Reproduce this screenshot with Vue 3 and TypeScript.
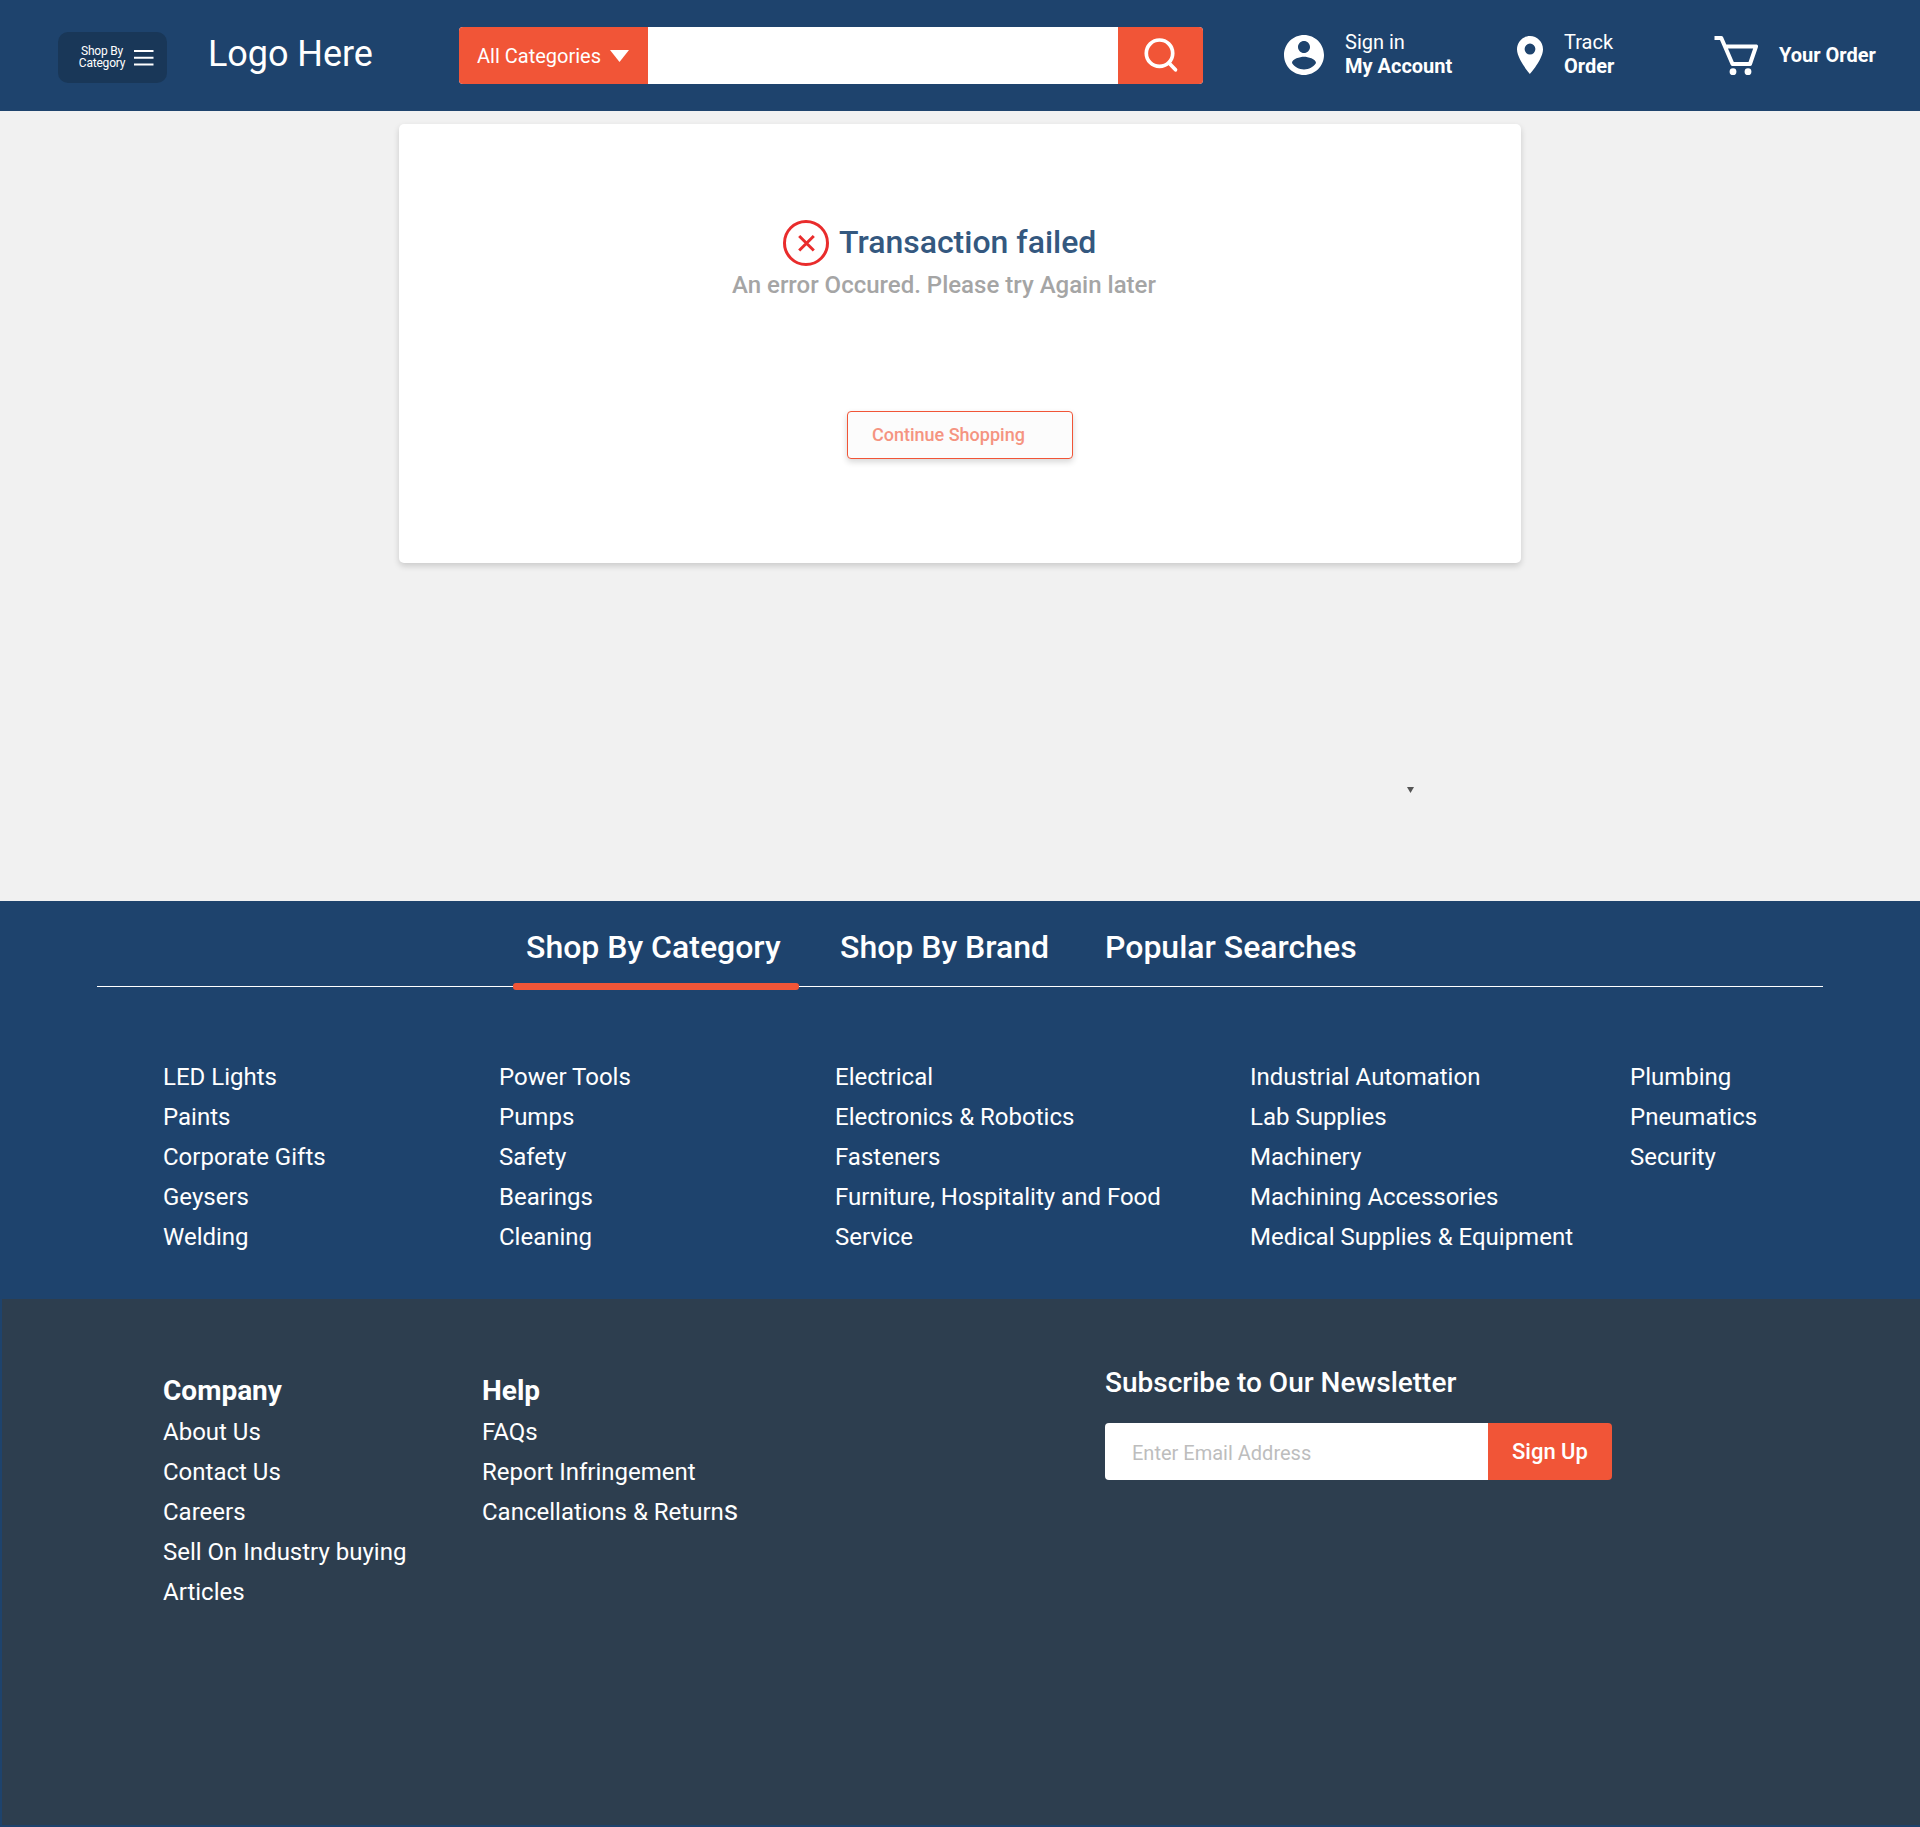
<script setup lang="ts">
const tabs: string[] = ['Shop By Category', 'Shop By Brand', 'Popular Searches']

const categories: string[][] = [
  ['LED Lights', 'Paints', 'Corporate Gifts', 'Geysers', 'Welding'],
  ['Power Tools', 'Pumps', 'Safety', 'Bearings', 'Cleaning'],
  ['Electrical', 'Electronics & Robotics', 'Fasteners', 'Furniture, Hospitality and Food', 'Service'],
  ['Industrial Automation', 'Lab Supplies', 'Machinery', 'Machining Accessories', 'Medical Supplies & Equipment'],
  ['Plumbing', 'Pneumatics', 'Security'],
]

const company: string[] = ['About Us', 'Contact Us', 'Careers', 'Sell On Industry buying', 'Articles']
const help: string[] = ['FAQs', 'Report Infringement']
</script>

<template>
  <div class="page">
    <header class="header">
      <button class="menu">
        <span class="menu-label">Shop By<br />Category</span>
        <svg width="20" height="16" viewBox="0 0 20 16" stroke="#fff" stroke-width="2">
          <path d="M0 1h19.500M0 7.700h19.500M0 14.400h19.500" />
        </svg>
      </button>
      <div class="logo">Logo Here</div>
      <div class="search">
        <div class="search-cat">
          <span>All Categories</span>
          <svg width="19" height="12" viewBox="0 0 19 12"><path d="M0 0h19L9.500 12z" fill="#fff" /></svg>
        </div>
        <div class="search-field"></div>
        <div class="search-go">
          <svg width="36" height="36" viewBox="0 0 36 36" fill="none" stroke="#fff" stroke-width="3.7" stroke-linecap="round">
            <circle cx="16.500" cy="16.200" r="13.200" />
            <path d="M26 26L32.500 32.800" />
          </svg>
        </div>
      </div>
      <div class="account">
        <svg width="48" height="48" viewBox="0 0 24 24" fill="#fff">
          <path d="M12 2C6.480 2 2 6.480 2 12s4.480 10 10 10 10-4.480 10-10S17.520 2 12 2zm0 3c1.660 0 3 1.340 3 3s-1.340 3-3 3-3-1.340-3-3 1.340-3 3-3zm0 14.200c-2.500 0-4.710-1.280-6-3.220.03-1.990 4-3.080 6-3.080 1.990 0 5.970 1.090 6 3.080-1.290 1.940-3.500 3.220-6 3.220z" />
        </svg>
        <div class="two-line"><span>Sign in</span><b>My Account</b></div>
      </div>
      <div class="track">
        <svg width="26" height="38" viewBox="5 2 14 20" preserveAspectRatio="none" fill="#fff">
          <path d="M12 2C8.130 2 5 5.130 5 9c0 5.250 7 13 7 13s7-7.750 7-13c0-3.870-3.130-7-7-7zm0 9.800a2.900 2.900 0 1 1 0-5.800 2.900 2.900 0 0 1 0 5.800z" />
        </svg>
        <div class="two-line"><span>Track</span><b>Order</b></div>
      </div>
      <div class="cart">
        <svg width="44" height="40" viewBox="0 0 44 40" fill="none" stroke="#fff">
          <path d="M.5 2H7.300L18.500 28H36L42 10.500H11.500" stroke-width="4" stroke-linejoin="round" />
          <circle cx="19" cy="35.700" r="3.400" fill="#fff" stroke="none" />
          <circle cx="34" cy="35.700" r="3.400" fill="#fff" stroke="none" />
        </svg>
        <b>Your Order</b>
      </div>
    </header>

    <main class="main">
      <section class="card">
        <div class="headline">
          <svg width="46" height="46" viewBox="0 0 46 46" fill="none" stroke="#e92c2c" stroke-width="3">
            <circle cx="23" cy="23" r="21.500" />
            <path d="M16.200 16L30.800 30.500M30.800 16L16.200 30.500" stroke-width="3" />
          </svg>
          <h1>Transaction failed</h1>
        </div>
        <p>An error Occured. Please try Again later</p>
        <button class="continue">Continue Shopping</button>
      </section>
      <svg class="marker" width="7" height="6" viewBox="0 0 7 6"><path d="M0 0h7L3.500 6z" fill="#555" /></svg>
    </main>

    <section class="browse">
      <nav class="tabs">
        <a v-for="(t, i) in tabs" :key="t" :class="{ active: i === 0 }">{{ t }}</a>
      </nav>
      <div class="rule"><i></i></div>
      <div class="columns">
        <ul v-for="(col, i) in categories" :key="i">
          <li v-for="item in col" :key="item">{{ item }}</li>
        </ul>
      </div>
    </section>

    <footer class="footer">
      <div class="company">
        <h3>Company</h3>
        <ul><li v-for="c in company" :key="c">{{ c }}</li></ul>
      </div>
      <div class="help">
        <h3>Help</h3>
        <ul>
          <li v-for="h in help" :key="h">{{ h }}</li>
          <li>Cancellations &amp; Return<span class="big">s</span></li>
        </ul>
      </div>
      <div class="news">
        <h4>Subscribe to Our Newsletter</h4>
        <div class="signup">
          <div class="email">Enter Email Address</div>
          <button>Sign Up</button>
        </div>
      </div>
    </footer>
  </div>
</template>

<style>
body { margin: 0; background: #f1f1f1; }
</style>

<style scoped>
* { box-sizing: border-box; }
.page { width: 1920px; height: 1827px; display: flex; flex-direction: column; font-family: Roboto, "Liberation Sans", sans-serif; color: #fff; background: #f1f1f1; white-space: nowrap; overflow: hidden; }
h1, h3, h4, p, ul { margin: 0; padding: 0; list-style: none; }
button { font-family: inherit; border: 0; padding: 0; margin: 0; color: inherit; text-align: left; }
svg { display: block; flex: none; }

.header { flex: none; height: 111px; background: #1e436d; display: flex; align-items: flex-start; font-size: 20px; }
.menu { flex: none; width: 109px; height: 51px; margin: 32px 0 0 58px; border-radius: 10px; background: #193758; display: flex; align-items: center; padding-left: 20px; }
.menu-label { width: 48px; margin: 0 8px 2px 0; font-size: 12px; line-height: 12px; text-align: center; letter-spacing: -0.2px; }
.logo { width: 251px; margin: 33px 0 0 41px; font-size: 36px; line-height: 43px; letter-spacing: -0.05px; }
.search { flex: none; width: 744px; height: 57px; margin-top: 27px; display: flex; border-radius: 4px; overflow: hidden; background: #fff; }
.search-cat { width: 189px; background: #f15537; display: flex; align-items: center; gap: 9px; padding: 1px 0 0 18px; }
.search-cat span { width: 124px; }
.search-field { flex: 1; }
.search-go { width: 85px; background: #f15537; display: flex; padding: 10px 0 0 25px; }
.account, .track, .cart { flex: none; display: flex; }
.account { width: 237px; margin: 31px 0 0 77px; }
.account .two-line { margin: -1px 0 0 17px; }
.two-line { display: flex; flex-direction: column; line-height: 24px; }
.track { width: 197px; margin-top: 36px; }
.track .two-line { margin: -6px 0 0 21px; }
.cart { margin-top: 36px; }
.cart b { margin: 7px 0 0 21px; line-height: 24px; }

.main { flex: none; height: 790px; padding: 13px 0 0 399px; }
.card { width: 1122px; height: 439px; background: #fff; border-radius: 5px; box-shadow: 0 3px 6px rgba(0, 0, 0, 0.16); display: flex; flex-direction: column; }
.headline { display: flex; gap: 10px; margin: 96px 0 0 384px; height: 46px; }
h1 { font-size: 32px; line-height: 44px; font-weight: 500; color: #34587f; }
.card p { margin: 4px 0 0 333px; font-size: 24px; line-height: 30px; font-weight: 500; color: #a5a5a5; }
.continue { width: 226px; height: 48px; margin: 111px 0 0 448px; padding: 0 0 2px 24px; border: 1px solid #f15537; border-radius: 4px; background: #fcfcfc; box-shadow: 0 3px 6px rgba(0, 0, 0, 0.16); font-size: 18px; font-weight: 500; color: #f59481; }
.marker { margin: 224px 0 0 1008px; }

.browse { flex: none; height: 398px; background: #1e436d; }
.tabs { display: flex; height: 82px; padding: 26px 0 0 526px; font-size: 32px; line-height: 40px; font-weight: 500; }
.tabs a:nth-child(1) { width: 314px; }
.tabs a:nth-child(2) { width: 265px; }
.rule { width: 1726px; height: 7px; margin-left: 97px; display: flex; align-items: center; background: linear-gradient(#fff, #fff) 0 3px / 100% 1px no-repeat; }
.rule i { width: 286px; height: 7px; margin-left: 416px; border-radius: 3px; background: #f15537; }
.columns { display: grid; grid-template-columns: 336px 336px 415px 380px auto; padding: 67px 0 0 163px; font-size: 24px; line-height: 40px; }

.footer { flex: 1; background: #2d3e4f; border-left: 2px solid #1e436d; border-bottom: 2px solid #1e436d; display: flex; font-size: 24px; line-height: 40px; }
.company { width: 319px; margin: 71px 0 0 161px; }
.help { width: 623px; margin-top: 71px; }
h3 { font-size: 28px; line-height: 41px; margin-bottom: 1px; font-weight: 700; }
.help li { height: 40px; }
.big { font-size: 28px; line-height: 1; }
.news { margin-top: 64px; }
h4 { font-size: 28px; line-height: 40px; font-weight: 500; }
.signup { width: 507px; height: 57px; margin-top: 20px; display: flex; border-radius: 4px; overflow: hidden; }
.email { width: 383px; background: #fff; color: #bdbdbd; font-size: 20px; line-height: 60px; padding-left: 27px; }
.signup button { flex: 1; background: #f15537; font-size: 22px; font-weight: 500; padding-left: 24px; }
</style>
